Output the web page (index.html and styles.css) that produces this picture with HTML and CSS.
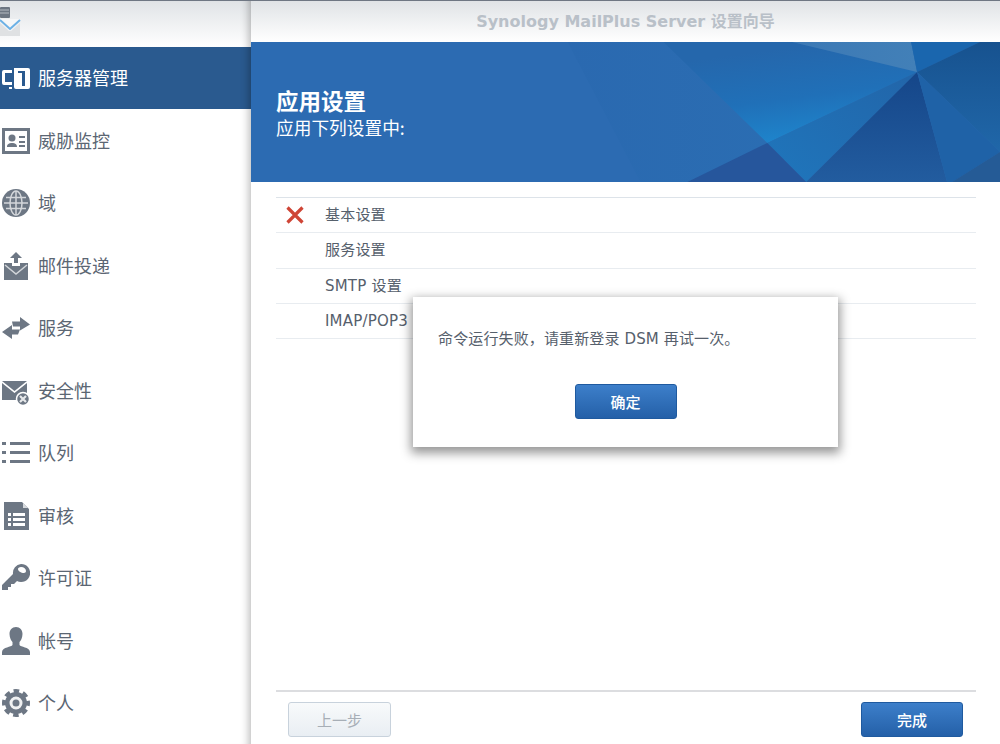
FILE: index.html
```html
<!DOCTYPE html>
<html lang="zh">
<head>
<meta charset="utf-8">
<title>Synology MailPlus Server</title>
<link rel="stylesheet" href="styles.css">
</head>
<body>
<div class="app">
  <aside class="sidebar">
    <div class="side-head">
      <svg class="logo" width="30" height="36" viewBox="0 0 30 36">
        <rect x="0" y="6" width="10" height="11" rx="1" fill="#6d7682"/>
        <path d="M0 9h9M0 12h9" stroke="#b5bac1" stroke-width="1"/>
        <path d="M0 18h20l-10 8z" fill="#f6f7f8"/>
        <path d="M0 19l10 9 10-9" fill="none" stroke="#6cb1e6" stroke-width="2"/>
        <path d="M0 22l9 8h2l9-8v13H0z" fill="#dfe1e3"/>
      </svg>
    </div>
    <nav class="nav">
      <a class="item active">
        <svg class="ico" viewBox="0 0 28 28"><path fill-rule="evenodd" d="M12 4h14a2 2 0 0 1 2 2v17a2 2 0 0 1-2 2H14a2 2 0 0 1-2-2zM16 7v2h4v13h3V7z"/><path d="M0 8a2 2 0 0 1 2-2h8v3H3v9h7v3H2a2 2 0 0 1-2-2zM7 23h3v2H7z"/></svg>
        <span>服务器管理</span>
      </a>
      <a class="item">
        <svg class="ico" viewBox="0 0 28 28"><path fill-rule="evenodd" d="M0 1h28v26H0zM3 4v20h22V4z"/><circle cx="10" cy="11" r="3.500"/><path d="M5 20c0-3 2-4 5-4s5 1 5 4zM17 9h6v2h-6zM17 14h6v2h-6zM17 18h6v2h-6z"/></svg>
        <span>威胁监控</span>
      </a>
      <a class="item">
        <svg class="ico" viewBox="0 0 28 28"><circle cx="14" cy="14" r="14"/><g fill="none" stroke="#fff" stroke-width="1.500" opacity=".7"><ellipse cx="14" cy="14" rx="6" ry="12"/><path d="M14 2v24M4 8.500h20M2 14h24M4 19.500h20"/></g></svg>
        <span>域</span>
      </a>
      <a class="item">
        <svg class="ico" viewBox="0 0 28 28"><path d="M14 0l6 6h-4v5h-4V6H8z"/><path d="M2 11h8v3h8v-3h8v17H2z"/><path d="M3 13l11 9 11-9" fill="none" stroke="#d2d6da" stroke-width="1.500"/></svg>
        <span>邮件投递</span>
      </a>
      <a class="item">
        <svg class="ico" viewBox="0 0 28 28"><path d="M18 3l10 7.500-10 6v-4H11l-1-5h8zM10 11v4.500h8l-2 5h-6V25L0 18z"/></svg>
        <span>服务</span>
      </a>
      <a class="item">
        <svg class="ico" viewBox="0 0 28 28"><path d="M0 4h25L12.500 14z"/><path d="M0 6l12.500 10L25 6v17H0z"/><circle class="badge" cx="21" cy="22" r="6.500"/><path d="M18 19l6 6M24 19l-6 6" stroke="#e6e8ea" stroke-width="2.200"/></svg>
        <span>安全性</span>
      </a>
      <a class="item">
        <svg class="ico" viewBox="0 0 28 28"><path d="M0 3h4v3H0zM8 3h20v3H8zM0 12h4v3H0zM8 12h20v3H8zM0 21h4v3H0zM8 21h20v3H8z"/></svg>
        <span>队列</span>
      </a>
      <a class="item">
        <svg class="ico" viewBox="0 0 28 28"><path fill-rule="evenodd" d="M2 0h18l7 7v21H2zM6 11v3h3v-3zM11 11v3h12v-3zM6 16v3h3v-3zM11 16v3h12v-3zM6 21v3h3v-3zM11 21v3h12v-3z"/><path d="M21 1l5 5h-5z" fill="#d6d9dd"/></svg>
        <span>审核</span>
      </a>
      <a class="item">
        <svg class="ico" viewBox="0 0 28 28"><path fill-rule="evenodd" d="M19 0a9 9 0 1 1-4 17l-3 3h-3v3H6v3H0v-5l11-11A9 9 0 0 1 19 0zM19 3c-2 0-3 1-3 2 0 2 3 4 6 4 1 0 2-1 2-2 0-2-2-4-5-4z"/></svg>
        <span>许可证</span>
      </a>
      <a class="item">
        <svg class="ico" viewBox="0 0 28 28"><path d="M14 0c4 0 6.500 3 6.500 7 0 4-2 7-3 8v3c1 2 10 2 10.500 7v3H0v-3c.5-5 9.500-5 10.500-7v-3c-1-1-3-4-3-8 0-4 2.500-7 6.500-7z"/></svg>
        <span>帐号</span>
      </a>
      <a class="item">
        <svg class="ico" viewBox="0 0 28 28"><circle class="gear-teeth" cx="14" cy="14" r="12"/><circle cx="14" cy="14" r="11"/><circle class="gear-ring" cx="14" cy="14" r="5"/></svg>
        <span>个人</span>
      </a>
    </nav>
  </aside>

  <main class="main">
    <header class="title-bar">Synology MailPlus Server 设置向导</header>
    <section class="banner">
      <svg class="banner-art" viewBox="0 0 750 140" preserveAspectRatio="none">
        <defs>
          <linearGradient id="g1" x1="0" y1="0" x2="1" y2="0"><stop offset="0" stop-color="#2a69b0"/><stop offset="1" stop-color="#2b70b4"/></linearGradient>
          <linearGradient id="g2" gradientUnits="userSpaceOnUse" x1="505" y1="10" x2="517" y2="101"><stop offset="0" stop-color="#2567ac"/><stop offset=".55" stop-color="#2070b8"/><stop offset="1" stop-color="#1e84cb"/></linearGradient>
          <linearGradient id="g3" x1="0" y1="0" x2="1" y2="0"><stop offset="0" stop-color="#3c79b5"/><stop offset="1" stop-color="#4280b8"/></linearGradient>
          <linearGradient id="g4" x1="0" y1="1" x2="1" y2="0"><stop offset="0" stop-color="#1f76bc"/><stop offset="1" stop-color="#2265a9"/></linearGradient>
          <linearGradient id="g5" x1="0.500" y1="0" x2="0.500" y2="1"><stop offset="0" stop-color="#154689"/><stop offset="1" stop-color="#225c9f"/></linearGradient>
          <linearGradient id="g6" x1="0.500" y1="0" x2="0.500" y2="1"><stop offset="0" stop-color="#17528f"/><stop offset="1" stop-color="#2067a9"/></linearGradient>
        </defs>
        <polygon points="317,0 542,0 667,30 517,101 437,140 390,140" fill="url(#g1)"/>
        <polygon points="413,0 542,0 667,30 517,101" fill="url(#g2)"/>
        <polygon points="542,0 661,0 667,30" fill="url(#g3)"/>
        <polygon points="661,0 730,0 667,30" fill="#1a66ae"/>
        <polygon points="730,0 750,0 750,110 667,30" fill="url(#g6)"/>
        <polygon points="667,30 517,101 556,140" fill="url(#g4)"/>
        <polygon points="517,101 437,140 556,140" fill="#26569c"/>
        <polygon points="667,30 556,140 697,140" fill="url(#g5)"/>
        <polygon points="667,30 750,110 702,140 697,140" fill="#1f62a7"/>
        <polygon points="750,110 702,140 750,140" fill="#255b96"/>
      </svg>
      <h1 class="banner-title">应用设置</h1>
      <p class="banner-sub">应用下列设置中:</p>
    </section>
    <section class="content">
      <ul class="steps">
        <li class="step"><span class="mark"><svg width="18" height="18" viewBox="0 0 18 18"><path d="M1.500 1.500l15 15M16.500 1.500l-15 15" stroke="#cf4536" stroke-width="3.200"/></svg></span><span class="step-label">基本设置</span></li>
        <li class="step"><span class="mark"></span><span class="step-label">服务设置</span></li>
        <li class="step"><span class="mark"></span><span class="step-label">SMTP 设置</span></li>
        <li class="step"><span class="mark"></span><span class="step-label">IMAP/POP3 设置</span></li>
      </ul>
    </section>
    <footer class="footer">
      <button class="btn btn-off">上一步</button>
      <button class="btn btn-blue">完成</button>
    </footer>
    <div class="dialog">
      <p class="dialog-text">命令运行失败，请重新登录 DSM 再试一次。</p>
      <div class="dialog-actions"><button class="btn btn-blue">确定</button></div>
    </div>
  </main>
</div>
</body>
</html>
```

FILE: styles.css
```css
* { box-sizing: border-box; }
html, body { margin: 0; height: 100%; }
body {
  font-family: "DejaVu Sans", "Noto Sans CJK SC", sans-serif;
  background: #fff;
  overflow: hidden;
}
.app {
  display: flex;
  width: 1000px;
  height: 744px;
  border-top: 1px solid #6f7783;
}
.sidebar {
  width: 251px;
  flex: none;
  box-shadow: inset -10px 0 8px -8px rgba(0, 0, 0, .28);
  position: relative;
  z-index: 1;
}
.side-head {
  height: 46px;
  background: linear-gradient(#e0e3e6, #fff);
  box-shadow: inset -10px 0 8px -8px rgba(0, 0, 0, .28);
}
.logo { display: block; }
.nav { display: flex; flex-direction: column; }
.item {
  height: 62.500px;
  display: flex;
  align-items: center;
  gap: 8px;
  padding-left: 2px;
  font: 18px "Noto Sans CJK SC", sans-serif;
  color: #5b6673;
}
.item span { line-height: 24px; margin-bottom: 2px; }
.ico { width: 28px; height: 28px; flex: none; fill: #6d7784; }
.gear-teeth { fill: none; stroke: #6d7784; stroke-width: 4; stroke-dasharray: 5.500 3.925; stroke-dashoffset: 2.750; }
.gear-ring { stroke: #fff; stroke-width: 3; opacity: .9; }
.badge { stroke: #fff; stroke-width: 1.500; }
.active {
  height: 62px;
  margin-bottom: .5px;
  background: #2a5a8f;
  color: #fff;
  box-shadow: inset -10px 0 8px -8px rgba(0, 0, 0, .3);
}
.active .ico { fill: #fff; }
.main {
  position: relative;
  flex: 1;
  min-width: 0;
  display: flex;
  flex-direction: column;
}
.title-bar {
  height: 41px;
  flex: none;
  display: flex;
  align-items: center;
  justify-content: center;
  padding-bottom: 3px;
  background: linear-gradient(#e0e3e6, #fff);
  color: #b9c0c8;
  font-size: 16px;
  font-weight: 700;
}
.banner {
  position: relative;
  height: 140px;
  flex: none;
  background: #2c6bb2;
  color: #fff;
  padding: 45px 25px 0;
  overflow: hidden;
}
.banner-art { position: absolute; inset: 0; width: 100%; height: 100%; }
.banner-title {
  position: relative;
  margin: 0;
  font: 700 22.500px/26px "Noto Sans CJK SC", sans-serif;
}
.banner-sub {
  position: relative;
  margin: 2px 0 0;
  font: 17.700px/24px "Noto Sans CJK SC", sans-serif;
}
.content { flex: 1; padding: 15px 24px 0 25px; }
.steps {
  list-style: none;
  margin: 0;
  padding: 0;
  border-top: 1px solid #dde3e9;
}
.step {
  height: 35.250px;
  display: flex;
  align-items: center;
  border-bottom: 1px solid #e8ecf0;
  font-size: 15px;
  letter-spacing: .2px;
  color: #56606c;
}
.step-label { margin-bottom: 3px; }
.mark { width: 49px; padding-left: 10px; display: flex; flex: none; }
.footer {
  flex: none;
  height: 54px;
  margin: 0 24px 0 25px;
  padding: 10px 13px 0 12px;
  display: flex;
  justify-content: space-between;
  align-items: flex-start;
  border-top: 2px solid #dcdde0;
}
.btn {
  width: 102px;
  height: 35px;
  border-radius: 3px;
  font: 15px "Noto Sans CJK SC", sans-serif;
  padding: 0;
}
.btn-blue {
  background: linear-gradient(#3d7fca, #2460a8);
  border: 1px solid #1f5a9f;
  color: #fff;
  font-weight: 500;
}
.btn-off {
  width: 103px;
  background: linear-gradient(#f8fafb, #e9eef3);
  border: 1px solid #c8d2dc;
  color: #a7aeb6;
}
.dialog {
  position: absolute;
  left: 162px;
  top: 296px;
  width: 425px;
  height: 150px;
  background: #fff;
  box-shadow: 0 4px 10px 2px rgba(0, 0, 0, .42);
  padding: 30px 25px 0;
  z-index: 2;
}
.dialog-text {
  margin: 0;
  font-size: 15px;
  letter-spacing: .13px;
  line-height: 24px;
  color: #56606c;
}
.dialog-actions {
  display: flex;
  justify-content: center;
  margin-top: 33px;
}
```
